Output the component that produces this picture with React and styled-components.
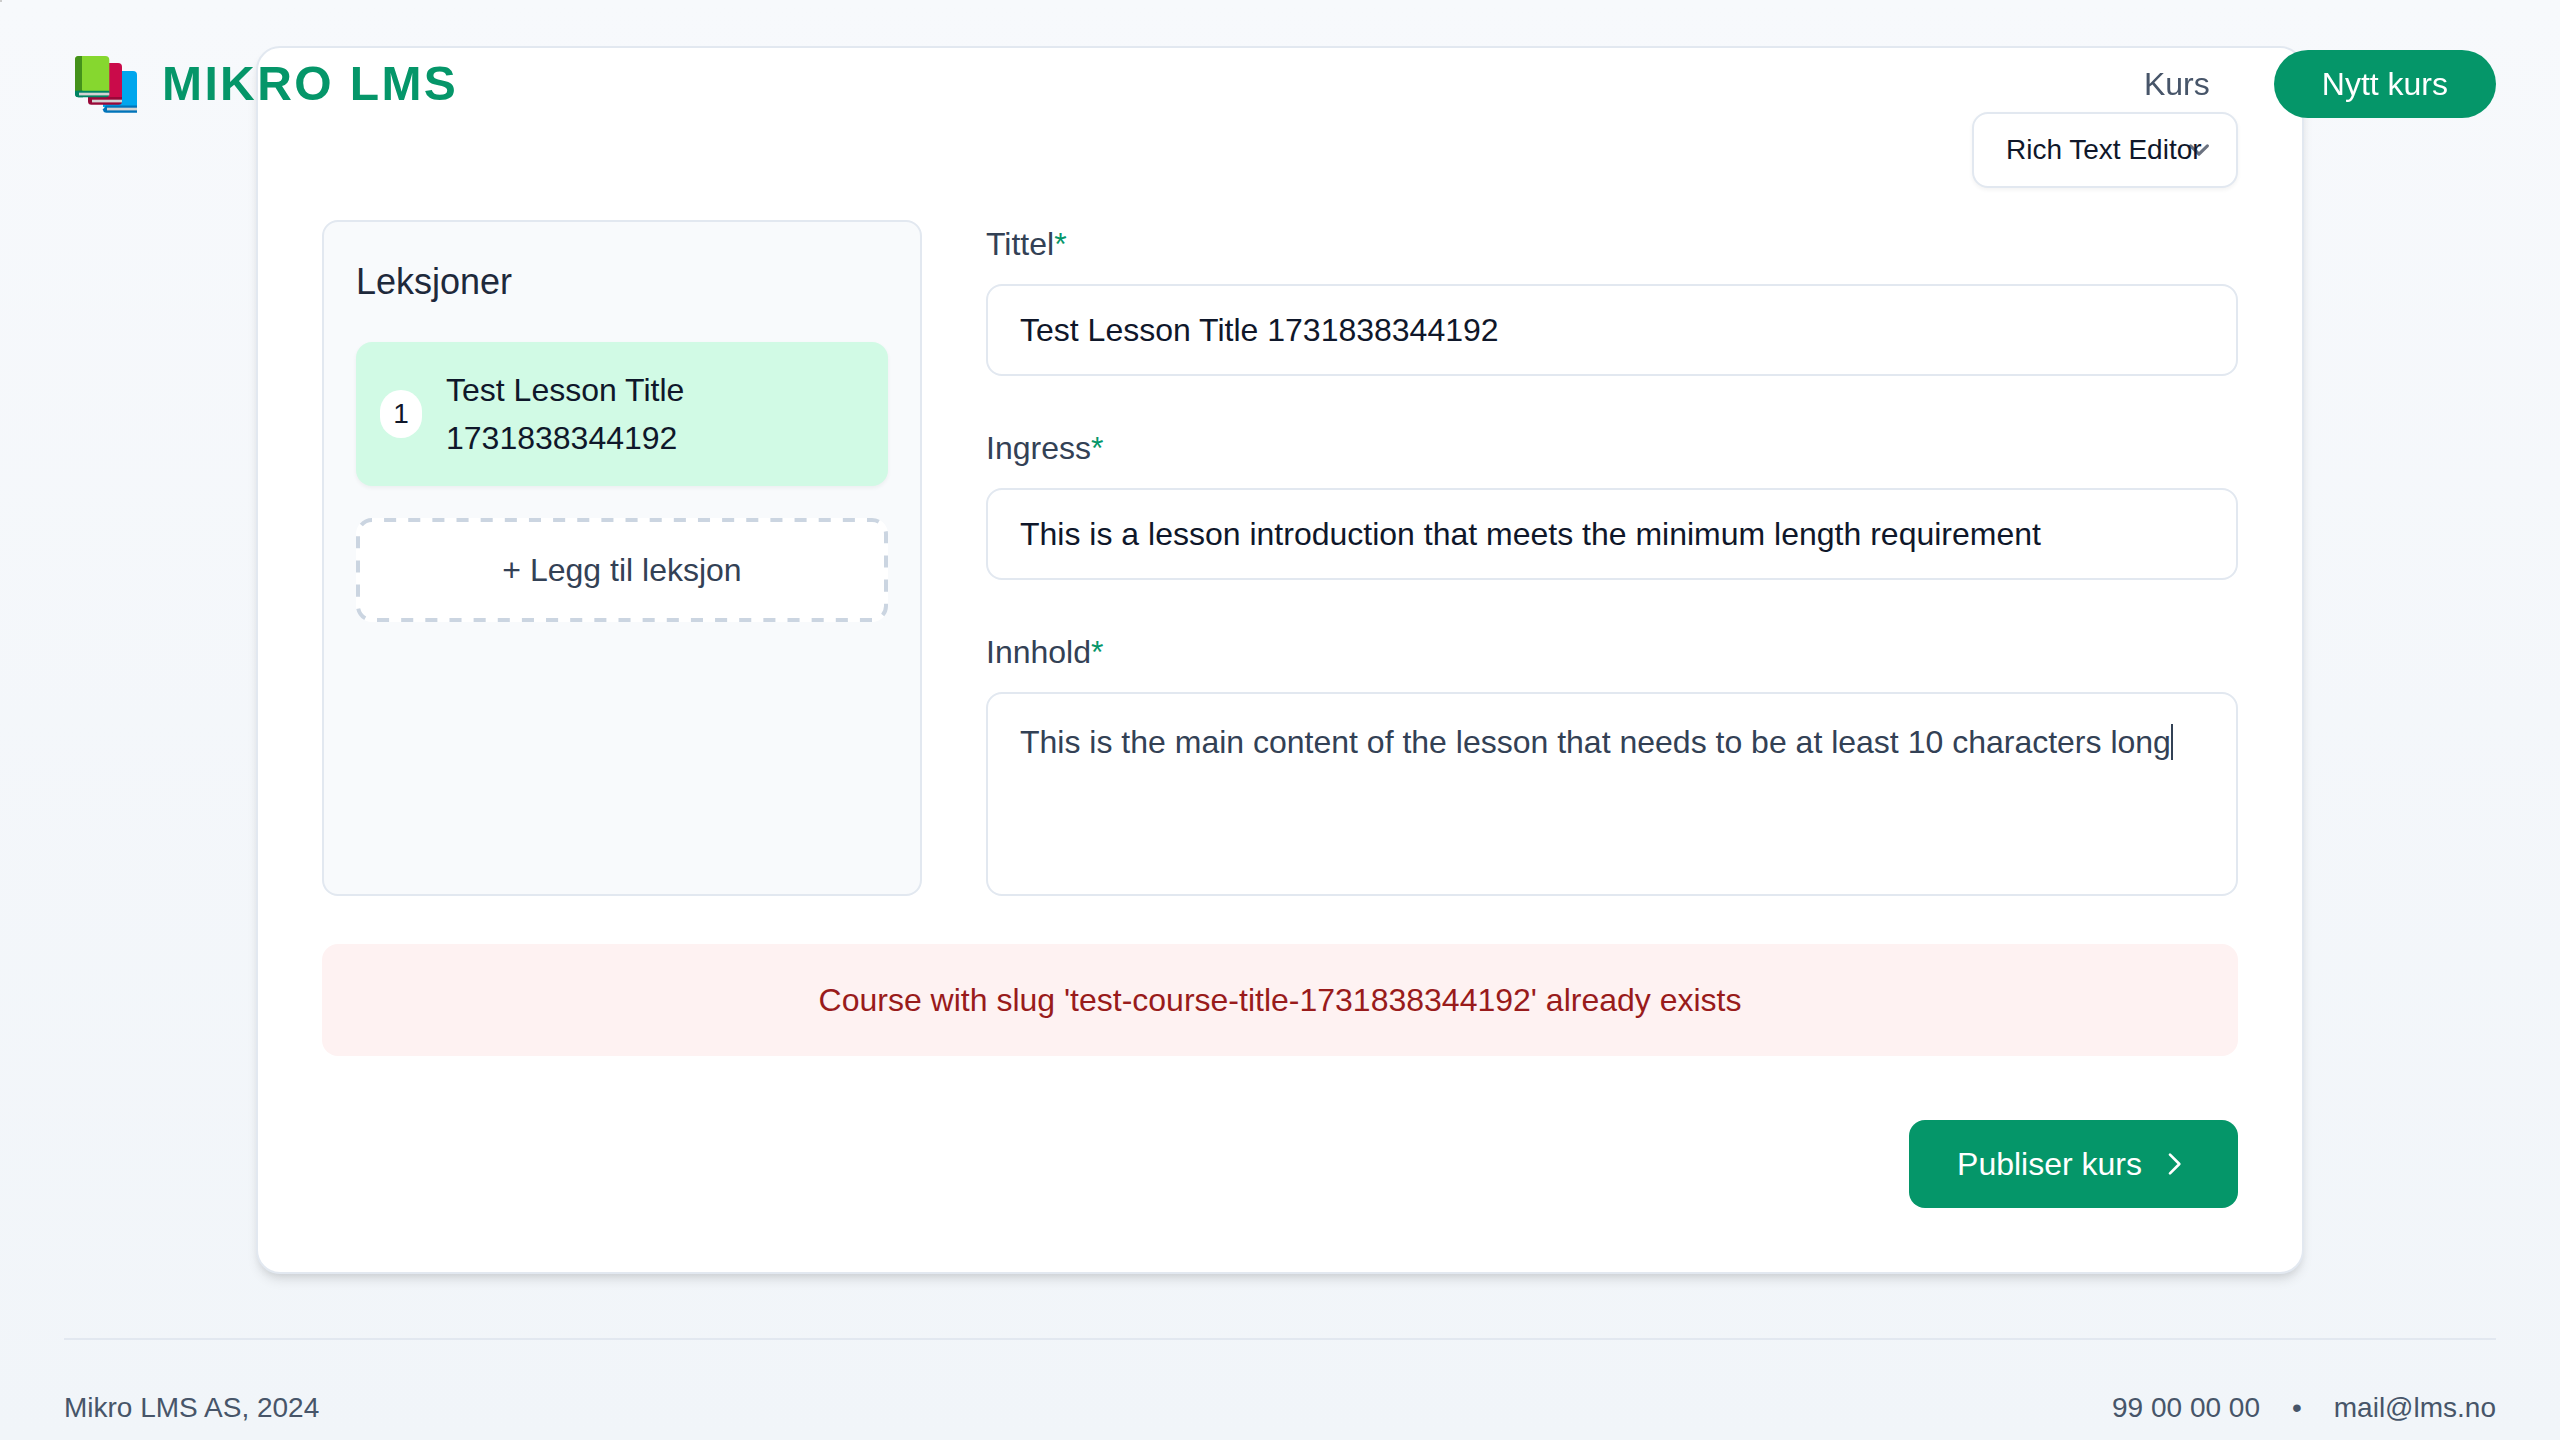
import React, { useId, useLayoutEffect, useState } from "react";
import styled, { createGlobalStyle } from "styled-components";

const fontStack = '"Liberation Sans", Arial, Helvetica, sans-serif';

const GlobalStyle = createGlobalStyle`
  *, *::before, *::after { box-sizing: border-box; }
  body {
    margin: 0;
    font-family: ${fontStack};
    font-size: 32px;
    line-height: 48px;
    color: #0f172a;
  }
  button, input, textarea, select { font: inherit; color: inherit; margin: 0; }
  a { color: inherit; text-decoration: none; }
`;

const Page = styled.div`
  min-height: 100vh;
  padding: 46px 64px 12px;
  display: flex;
  flex-direction: column;
  gap: 64px;
  background: linear-gradient(to bottom, #f7f9fc, #f1f5f9);
`;

const Announcer = styled.div`
  position: absolute;
  top: 0;
  left: 0;
  width: 2px;
  height: 2px;
  background: #cccccc;
`;

const Header = styled.header`
  position: fixed;
  top: 0;
  left: 0;
  right: 0;
  z-index: 10;
  padding: 48px 64px;
  display: flex;
  align-items: center;
  justify-content: space-between;
`;

const Brand = styled.a`
  display: flex;
  align-items: center;
  gap: 16px;
  font-size: 48px;
  line-height: 72px;
  font-weight: 700;
  letter-spacing: 0.05em;
  color: #059669;
`;

const Nav = styled.nav`
  display: flex;
  align-items: center;
  gap: 64px;
  line-height: 36px;
`;

const NavLink = styled.a`
  color: #475569;
`;

const NavButton = styled.a`
  padding: 16px 48px;
  border-radius: 34px;
  background: #059669;
  color: #ffffff;
`;

const Card = styled.main`
  width: 100%;
  max-width: 2048px;
  margin: 0 auto;
  padding: 64px;
  border: 2px solid #e2e8f0;
  border-radius: 24px;
  background: #ffffff;
  box-shadow: 0 8px 12px -2px rgba(0, 0, 0, 0.1), 0 4px 8px -4px rgba(0, 0, 0, 0.1);
`;

const Toolbar = styled.div`
  display: flex;
  justify-content: flex-end;
  margin-bottom: 32px;
`;

const chevronDown =
  "url(\"data:image/svg+xml,%3csvg xmlns='http://www.w3.org/2000/svg' fill='none' viewBox='0 0 20 20'%3e%3cpath stroke='%236b7280' stroke-linecap='round' stroke-linejoin='round' stroke-width='1.5' d='M6 8l4 4 4-4'/%3e%3c/svg%3e\")";

const EditorSelect = styled.select`
  appearance: none;
  width: 266px;
  padding: 16px 32px;
  border: 2px solid #e2e8f0;
  border-radius: 16px;
  background: #ffffff ${chevronDown} no-repeat right 16px center / 42px 42px;
  box-shadow: 0 2px 4px rgba(0, 0, 0, 0.05);
  font-size: 28px;
  line-height: 40px;
`;

const Columns = styled.div`
  display: grid;
  grid-template-columns: 600px minmax(0, 1fr);
  gap: 64px;
`;

const Sidebar = styled.aside`
  display: flex;
  flex-direction: column;
  gap: 32px;
  padding: 32px;
  border: 2px solid #e2e8f0;
  border-radius: 16px;
  background: #f8fafc;
`;

const SidebarTitle = styled.h2`
  margin: 0;
  font-size: 36px;
  line-height: 56px;
  font-weight: 400;
  color: #1e293b;
`;

const LessonButton = styled.button`
  display: flex;
  align-items: center;
  gap: 24px;
  padding: 24px;
  border: 0;
  border-radius: 16px;
  background: #d1fae5;
  box-shadow: 0 2px 4px rgba(0, 0, 0, 0.05);
  text-align: left;
`;

const LessonNumber = styled.span`
  flex: none;
  width: 42px;
  border-radius: 24px;
  background: #ffffff;
  font-size: 28px;
  text-align: center;
`;

const AddButton = styled.button`
  position: relative;
  padding: 28px;
  border: 0;
  border-radius: 16px;
  background: #ffffff;
  color: #334155;
`;

const DashedOutline = styled.svg`
  position: absolute;
  inset: 0;
  width: 100%;
  height: 100%;

  rect {
    width: calc(100% - 4px);
    height: calc(100% - 4px);
    fill: none;
    stroke: #cbd5e1;
    stroke-width: 4px;
  }
`;

const Form = styled.form`
  display: flex;
  flex-direction: column;
  gap: 48px;
`;

const FieldBox = styled.div`
  display: flex;
  flex-direction: column;
  gap: 16px;
`;

const Label = styled.label`
  color: #334155;
`;

const Required = styled.span`
  color: #059669;
`;

const Input = styled.input`
  width: 100%;
  height: 92px;
  padding: 24px 32px;
  border: 2px solid #e2e8f0;
  border-radius: 16px;
  background: #ffffff;
  line-height: 40px;
`;

const EditorFrame = styled.div`
  position: relative;
  display: flex;
  border: 2px solid #e2e8f0;
  border-radius: 16px;
  background: #ffffff;
  color: #334155;
`;

const Textarea = styled.textarea`
  flex: 1;
  height: 200px;
  padding: 24px 32px;
  border: 0;
  border-radius: 16px;
  background: transparent;
  resize: none;
  outline: none;
`;

const Caret = styled.span`
  position: absolute;
  top: 30px;
  width: 2px;
  height: 36px;
  background: #334155;
`;

const Alert = styled.p`
  margin: 48px 0 64px;
  padding: 32px;
  border-radius: 16px;
  background: #fef2f2;
  color: #991b1b;
  text-align: center;
`;

const Actions = styled.div`
  display: flex;
  justify-content: flex-end;
`;

const PublishButton = styled.button`
  display: flex;
  align-items: center;
  gap: 16px;
  padding: 20px 48px;
  border: 0;
  border-radius: 16px;
  background: #059669;
  color: #ffffff;
`;

const Footer = styled.footer`
  display: flex;
  justify-content: space-between;
  padding-top: 48px;
  border-top: 2px solid #e2e8f0;
  font-size: 28px;
  line-height: 40px;
  color: #475569;
`;

const Contact = styled.div`
  display: flex;
  gap: 32px;
`;

function BooksIcon() {
  return (
    <svg width="82" height="64" viewBox="0 0 82 64" aria-hidden="true">
      <path fill="#00a6ed" d="M39 19h30a4 4 0 0 1 4 4v32H39z" />
      <path fill="#0074ba" d="M42 53.5h31v7.2H42.5a3.5 3.5 0 0 1-3.5-3.500z" />
      <path fill="#d3d3d3" d="M43 55.7h30v2.700H43z" />
      <path fill="#ca0b4a" d="M24 11h30a4 4 0 0 1 4 4v32H24z" />
      <path fill="#990838" d="M24 45h34v4.200a3.500 3.500 0 0 1-3.500 3.500h-27A3.500 3.500 0 0 1 24 49.200z" />
      <path fill="#d3d3d3" d="M28 47.700h30v2.700H28z" />
      <path fill="#86d72f" d="M14.500 4h26.800a4 4 0 0 1 4 4v32H11V7.500A3.500 3.500 0 0 1 14.500 4z" />
      <path fill="#44911b" d="M14.500 4H18v36h-7V7.500A3.500 3.500 0 0 1 14.500 4z" />
      <path fill="#008463" d="M14.500 38.700h30.800v3.100a3.500 3.500 0 0 1-3.500 3.500H14.500a3.300 3.300 0 0 1 0-6.600z" />
      <path fill="#008463" d="M11 38.700h8v6.600h-4.500A3.500 3.500 0 0 1 11 41.800z" />
      <path fill="#d3d3d3" d="M15 40.700h30.300v2.700H15z" />
    </svg>
  );
}

function ChevronRight() {
  return (
    <svg width="32" height="32" viewBox="0 0 24 24" fill="none" stroke="currentColor" strokeWidth="2" strokeLinecap="round" strokeLinejoin="round" aria-hidden="true">
      <path d="M9 5l7 7-7 7" />
    </svg>
  );
}

function Field({ label, children }) {
  const id = useId();
  return (
    <FieldBox>
      <Label htmlFor={id}>
        {label}
        <Required>*</Required>
      </Label>
      {children(id)}
    </FieldBox>
  );
}

function ContentEditor({ id, value, onChange }) {
  const [caretLeft, setCaretLeft] = useState(32);
  useLayoutEffect(() => {
    const context = document.createElement("canvas").getContext("2d");
    context.font = `32px ${fontStack}`;
    setCaretLeft(32 + Math.ceil(context.measureText(value).width));
  }, [value]);
  return (
    <EditorFrame>
      <Textarea id={id} value={value} onChange={(e) => onChange(e.target.value)} />
      <Caret style={{ left: caretLeft }} />
    </EditorFrame>
  );
}

export default function App() {
  const [title, setTitle] = useState("Test Lesson Title 1731838344192");
  const [intro, setIntro] = useState("This is a lesson introduction that meets the minimum length requirement");
  const [content, setContent] = useState(
    "This is the main content of the lesson that needs to be at least 10 characters long"
  );

  return (
    <>
      <GlobalStyle />
      <Header>
        <Brand href="#">
          <BooksIcon />
          MIKRO LMS
        </Brand>
        <Nav>
          <NavLink href="#kurs">Kurs</NavLink>
          <NavButton href="#nytt">Nytt kurs</NavButton>
        </Nav>
      </Header>
      <Page>
        <Announcer />
        <Card>
          <Toolbar>
            <EditorSelect aria-label="Editor" defaultValue="rich">
              <option value="rich">Rich Text Editor</option>
            </EditorSelect>
          </Toolbar>
          <Columns>
            <Sidebar>
              <SidebarTitle>Leksjoner</SidebarTitle>
              <LessonButton type="button">
                <LessonNumber>1</LessonNumber>
                <span>{title}</span>
              </LessonButton>
              <AddButton type="button">
                <DashedOutline aria-hidden="true">
                  <rect x="2" y="2" rx="14" pathLength="1224" strokeDasharray="12 12" strokeDashoffset="12" />
                </DashedOutline>
                + Legg til leksjon
              </AddButton>
            </Sidebar>
            <Form>
              <Field label="Tittel">
                {(id) => <Input id={id} value={title} onChange={(e) => setTitle(e.target.value)} />}
              </Field>
              <Field label="Ingress">
                {(id) => <Input id={id} value={intro} onChange={(e) => setIntro(e.target.value)} />}
              </Field>
              <Field label="Innhold">
                {(id) => <ContentEditor id={id} value={content} onChange={setContent} />}
              </Field>
            </Form>
          </Columns>
          <Alert role="alert">Course with slug 'test-course-title-1731838344192' already exists</Alert>
          <Actions>
            <PublishButton type="button">
              Publiser kurs
              <ChevronRight />
            </PublishButton>
          </Actions>
        </Card>
        <Footer>
          <span>Mikro LMS AS, 2024</span>
          <Contact>
            <a href="tel:99000000">99 00 00 00</a>
            <span>•</span>
            <a href="mailto:mail@lms.no">mail@lms.no</a>
          </Contact>
        </Footer>
      </Page>
    </>
  );
}
